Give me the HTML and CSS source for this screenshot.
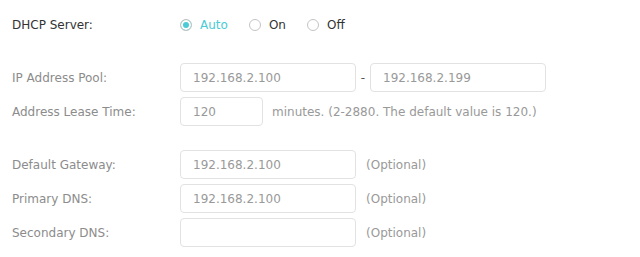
FILE: index.html
```html
<!DOCTYPE html>
<html lang="en">
  <head>
    <meta charset="UTF-8" />
    <title>DHCP Server</title>
    <link rel="stylesheet" href="styles.css">
  </head>
  <body>
    <form class="dhcp-form">
      <div class="row row-main">
        <label class="label label-dark">DHCP Server:</label>
        <div class="radios">
          <span class="radio checked"><span class="dot"></span>Auto</span>
          <span class="radio"><span class="dot"></span>On</span>
          <span class="radio"><span class="dot"></span>Off</span>
        </div>
      </div>

      <div class="group">
        <div class="row">
          <label class="label">IP Address Pool:</label>
          <input class="field" type="text" value="192.168.2.100">
          <span class="dash">-</span>
          <input class="field" type="text" value="192.168.2.199">
        </div>
        <div class="row">
          <label class="label">Address Lease Time:</label>
          <input class="field field-short" type="text" value="120">
          <span class="hint">minutes. (2-2880. The default value is 120.)</span>
        </div>
      </div>

      <div class="group">
        <div class="row">
          <label class="label">Default Gateway:</label>
          <input class="field" type="text" value="192.168.2.100">
          <span class="hint hint-opt">(Optional)</span>
        </div>
        <div class="row">
          <label class="label">Primary DNS:</label>
          <input class="field" type="text" value="192.168.2.100">
          <span class="hint hint-opt">(Optional)</span>
        </div>
        <div class="row">
          <label class="label">Secondary DNS:</label>
          <input class="field" type="text" value="">
          <span class="hint hint-opt">(Optional)</span>
        </div>
      </div>
    </form>
  </body>
</html>
```

FILE: styles.css
```css
body {
    margin: 0;
    background-color: #fff;
    font-family: "DejaVu Sans", Verdana, sans-serif;
    font-size: 12px;
    color: #888;
}

.dhcp-form {
    padding: 10px 0 0 12px;
}

.row {
    display: flex;
    align-items: center;
    height: 29px;
    margin-bottom: 5px;
}

.group {
    margin-top: 24px; /* collapses with the row margin above */
}

.label {
    width: 168px;
    flex-shrink: 0;
    color: #8c8c8c;
}

.label-dark {
    color: #333;
}

.radios {
    display: flex;
    align-items: center;
}

.radio {
    display: flex;
    align-items: center;
    color: #333;
    margin-right: 21px;
}

.radio .dot {
    width: 10px;
    height: 10px;
    border: 1px solid #c4c4c4;
    border-radius: 50%;
    margin-right: 8px;
    box-sizing: content-box;
}

.radio.checked {
    color: #4acbd6;
}

.radio.checked .dot {
    background-color: #4acbd6;
    box-shadow: inset 0 0 0 2px #fff;
}

.field {
    width: 176px;
    height: 29px;
    box-sizing: border-box;
    border: 1px solid #e2e2e2;
    border-radius: 4px;
    padding: 0 12px;
    font-family: inherit;
    font-size: 12px;
    color: #999;
    background-color: #fff;
    outline: none;
}

.field-short {
    width: 83px;
}

.dash {
    width: 14px;
    text-align: center;
    color: #555;
}

.hint {
    margin-left: 9px;
    color: #999;
}

.hint-opt {
    margin-left: 10px;
}
```
